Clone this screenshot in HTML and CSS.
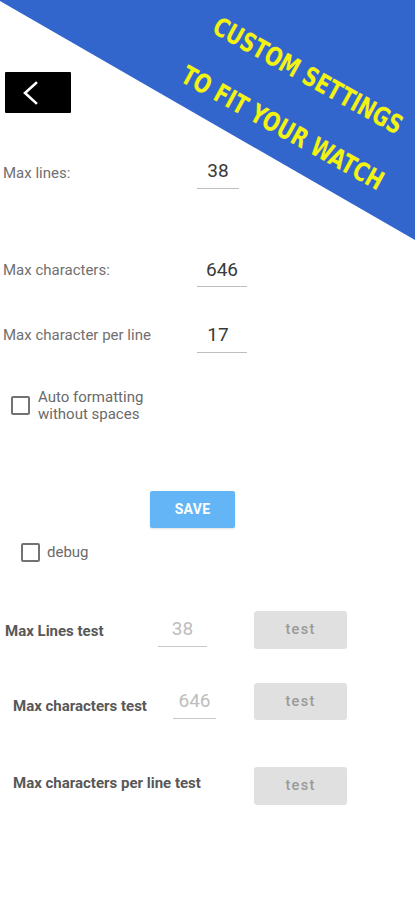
FILE: index.html
```html
<!DOCTYPE html>
<html>
<head>
<meta charset="utf-8">
<link rel="stylesheet" href="styles.css">
</head>
<body>
<div class="page">
  <svg class="banner" width="415" height="245" viewBox="0 0 415 245">
    <polygon points="0,0 415,0 415,240 0,1" fill="#3366cc"/>
  </svg>
  <div class="banner-text">
    <div class="banner-line">CUSTOM SETTINGS</div>
    <div class="banner-line">TO FIT YOUR WATCH</div>
  </div>

  <div class="back">
    <svg width="66" height="41" viewBox="0 0 66 41">
      <path d="M31 11 L20 21 L31 31" fill="none" stroke="#fff" stroke-width="2.6" stroke-linecap="square"/>
    </svg>
  </div>

  <div class="field field-1">
    <span class="label">Max lines:</span>
    <span class="input input-s">38</span>
  </div>
  <div class="field field-2">
    <span class="label">Max characters:</span>
    <span class="input">646</span>
  </div>
  <div class="field field-3">
    <span class="label">Max character per line</span>
    <span class="input input-17">17</span>
  </div>

  <div class="check check-auto">
    <span class="box"></span>
    <span class="check-label">Auto formatting<br>without spaces</span>
  </div>

  <div class="save">SAVE</div>

  <div class="check check-debug">
    <span class="box"></span>
    <span class="check-label">debug</span>
  </div>

  <div class="test-row test-a">
    <span class="test-label">Max Lines test</span>
    <span class="test-input">38</span>
    <span class="test-btn">test</span>
  </div>
  <div class="test-row test-b">
    <span class="test-label">Max characters test</span>
    <span class="test-input">646</span>
    <span class="test-btn">test</span>
  </div>
  <div class="test-row test-c">
    <span class="test-label">Max characters per line test</span>
    <span class="test-btn">test</span>
  </div>
</div>
</body>
</html>
```

FILE: styles.css
```css
* { box-sizing: border-box; }
html, body { margin: 0; padding: 0; background: #fff; }
body { font-family: Roboto, "Liberation Sans", sans-serif; width: 415px; height: 900px; overflow: hidden; }
.page { position: relative; width: 415px; height: 900px; padding-top: 72px; overflow: hidden; }

.banner { position: absolute; left: 0; top: 0; display: block; }
.banner-text {
  position: absolute;
  left: 164px; top: 43px;
  width: 260px; height: 116px;
  transform: rotate(29deg) scaleX(0.85);
  text-align: center;
  color: #f3f312;
  font-family: "DejaVu Sans Condensed", "DejaVu Sans", sans-serif;
  font-stretch: condensed;
  font-weight: bold;
  font-size: 26px;
  line-height: 58px;
  white-space: nowrap;
}

.back {
  margin-left: 5px;
  width: 66px; height: 41px;
  background: #000;
  border-radius: 1px;
}
.back svg { display: block; }

.field { display: flex; align-items: center; padding-left: 3px; }
.field-1 { margin-top: 41px; }
.field-2 { margin-top: 64px; }
.field-3 { margin-top: 31px; }
.label { width: 194px; font-size: 15px; color: #707070; }
.field-1 .label { padding-top: 4px; }
.input {
  width: 50px; height: 34.5px;
  line-height: 33px;
  font-size: 19px;
  color: #3a3a3a;
  text-align: center;
  border-bottom: 1.5px solid #bdbdbd;
}
.input-s { width: 42px; }
.input-17 { padding-right: 8px; }

.check { display: flex; align-items: center; }
.check-auto { margin-top: 36px; padding-left: 11px; }
.check-debug { margin-top: 15px; padding-left: 21px; }
.box {
  width: 19px; height: 19px;
  border: 2px solid #727272;
  border-radius: 2px;
  flex: none;
}
.check-label { margin-left: 8px; font-size: 15px; line-height: 17px; color: #6a6a6a; }
.check-debug .check-label { margin-left: 7px; }

.save {
  margin-top: 68px; margin-left: 150px;
  width: 85px; height: 37px;
  background: #64b5f6;
  border-radius: 2px;
  color: #fff;
  font-size: 14px; font-weight: bold;
  letter-spacing: 0.3px;
  display: flex; align-items: center; justify-content: center;
  box-shadow: 0 1px 2px rgba(0,0,0,0.12);
}

.test-row { display: flex; align-items: center; height: 38px; }
.test-a { margin-top: 49px; padding-left: 5px; }
.test-b { margin-top: 34px; padding-left: 13px; }
.test-c { margin-top: 46px; padding-left: 13px; }
.test-label { font-size: 15px; font-weight: bold; color: #585858; }
.test-a .test-label { width: 153px; padding-top: 3px; }
.test-b .test-label { width: 160px; padding-top: 9px; }
.test-c .test-label { width: 241px; padding-bottom: 6px; }
.test-input {
  height: 34.5px; line-height: 33px;
  font-size: 19px; color: #bdbdbd;
  text-align: center;
  border-bottom: 1.5px solid #c8c8c8;
}
.test-a .test-input { width: 49px; margin-right: 47px; }
.test-b .test-input { width: 43px; margin-right: 38px; }
.test-btn {
  width: 93px; height: 38px;
  background: #e0e0e0;
  border-radius: 3px;
  color: #9a9a9a;
  font-size: 14.5px; font-weight: 500;
  letter-spacing: 1.3px;
  display: flex; align-items: center; justify-content: center;
}
.test-b .test-btn { height: 37px; }
```
